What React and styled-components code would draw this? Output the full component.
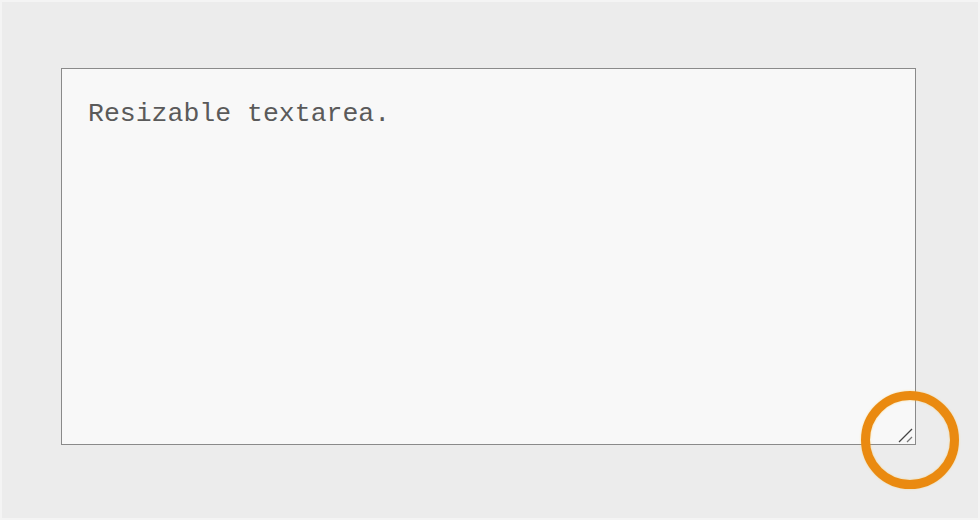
import React from "react"
import styled, { createGlobalStyle } from "styled-components"

const Global = createGlobalStyle`
  html, body {
    margin: 0;
    padding: 0;
    background: #ececec;
  }
`

const Page = styled.div`
  box-sizing: border-box;
  width: 980px;
  height: 520px;
  border: 2px solid #f4f4f4;
  background: #ececec;
  padding: 66px 0 0 59px;
`

const Field = styled.div`
  position: relative;
  width: 855px;
  height: 377px;
`

const Area = styled.textarea`
  box-sizing: border-box;
  display: block;
  width: 100%;
  height: 100%;
  margin: 0;
  padding: 30px 26px;
  border: 1px solid #8a8a8a;
  background: #f8f8f8;
  color: #5a5a5a;
  font-family: "Liberation Mono", "Courier New", monospace;
  font-size: 26.5px;
  line-height: 30px;
  resize: both;
  outline: none;

  &::-webkit-resizer {
    background: transparent;
  }
`

const Grip = styled.svg`
  position: absolute;
  right: 2px;
  bottom: 2px;
  width: 16px;
  height: 16px;
  pointer-events: none;
`

const Ring = styled.div`
  position: absolute;
  right: -43px;
  bottom: -44px;
  width: 98px;
  height: 98px;
  box-sizing: border-box;
  border: 9px solid #ea8a10;
  border-radius: 50%;
  box-shadow: 0 0 2px rgba(255, 200, 60, 0.6), inset 0 0 2px rgba(255, 200, 60, 0.6);
  pointer-events: none;
`

export default function App() {
  return (
    <>
      <Global />
      <Page>
        <Field>
          <Area defaultValue="Resizable textarea." spellCheck={false} />
          <Grip viewBox="0 0 16 16">
            <line x1="1" y1="15" x2="14" y2="2" stroke="#444" strokeWidth="1.3" />
            <line x1="9" y1="15" x2="14" y2="10" stroke="#777" strokeWidth="1.3" />
          </Grip>
          <Ring />
        </Field>
      </Page>
    </>
  )
}
